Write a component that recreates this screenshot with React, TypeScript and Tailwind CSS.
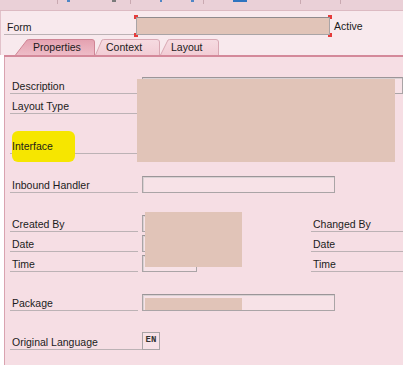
import React from "react";

const font = "font-['Liberation_Sans',Arial,sans-serif]";

function Tab({ label, width, slant, selected, textLeft }: { label: string; width: number; slant: number; selected?: boolean; textLeft: number }) {
  const w = width;
  const d = `M0.5,16 L${slant},1 Q${slant + 1},0.5 ${slant + 3},0.5 L${w - 3},0.5 Q${w - 0.5},0.5 ${w - 0.5},3 L${w - 0.5},16`;
  return (
    <div className="relative h-[16px] shrink-0" style={{ width: w }}>
      <svg className="absolute inset-0" width={w} height={16}>
        <defs>
          <linearGradient id={`g-${label}`} x1="0" y1="0" x2="0" y2="1">
            <stop offset="0" stopColor={selected ? "#e4a1b0" : "#f6dbe1"} />
            <stop offset="1" stopColor={selected ? "#eebcc7" : "#f2cdd5"} />
          </linearGradient>
        </defs>
        <path d={d + " Z"} fill={`url(#g-${label})`} stroke="none" />
        <path d={d} fill="none" stroke={selected ? "#cf8595" : "#d8a8b3"} strokeWidth={1} />
      </svg>
      <span className="absolute top-[1px] text-[10.5px] leading-[14px] text-[#1b1b1b]" style={{ left: textLeft }}>
        {label}
      </span>
    </div>
  );
}

function Label({ children, className = "" }: { children: React.ReactNode; className?: string }) {
  return (
    <div className={`h-full flex items-end border-b border-[#bcb2b5] pl-[2px] pb-[1px] text-[10.5px] leading-[12px] text-[#1b1b1b] ${className}`}>
      {children}
    </div>
  );
}

function Input({ className = "" }: { className?: string }) {
  return <div className={`h-[17px] self-end border border-[#aaa4a6] border-t-[#9b9598] shadow-[inset_1px_1px_0_#d9d1d3] bg-[#f7e2e7] ${className}`} />;
}

export default function App() {
  return (
    <div className={`${font} w-[416px] h-[370px] bg-white`}>
      <div className="w-[403px]">
        {/* top toolbar strip */}
        <div className="h-[11px] bg-[#ead0d7] border-b border-[#dcbac2] relative">
          <div className="absolute left-[57px] top-0 w-px h-[4px] bg-[#c9a9b1]" />
          <div className="absolute left-[67px] top-0 w-[3px] h-[2px] bg-[#4f86c6]" />
          <div className="absolute left-[112px] top-0 w-[4px] h-[2px] bg-[#7a7a7a]" />
          <div className="absolute left-[130px] top-0 w-px h-[4px] bg-[#c9a9b1]" />
          <div className="absolute left-[160px] top-0 w-[2px] h-[2px] bg-[#4f86c6]" />
          <div className="absolute left-[191px] top-0 w-[3px] h-[2px] bg-[#4f86c6]" />
          <div className="absolute left-[203px] top-0 w-px h-[4px] bg-[#c9a9b1]" />
          <div className="absolute left-[233px] top-0 w-[14px] h-[2px] bg-[#2f74c0]" />
          <div className="absolute left-[300px] top-0 w-px h-[4px] bg-[#c9a9b1]" />
          <div className="absolute left-[340px] top-0 w-px h-[4px] bg-[#c9a9b1]" />
        </div>

        {/* header */}
        <div className="bg-[#f8e9ed] border-l border-[#e2c2ca] pt-[6px]">
          <div className="flex items-stretch h-[18px]">
            <div className="w-[131px] ml-[3px] flex items-end border-b border-[#bcb2b5] pl-[3px] pb-[1px] text-[10.5px] leading-[12px] text-[#1b1b1b]">
              Form
            </div>
            <div className="relative ml-[1px] w-[194px] h-[18px] border border-[#a9a4a6] border-t-[#8f8a8c] bg-[#e1c4b8]">
              <span className="absolute -left-[3px] -top-[3px] w-[4px] h-[2px] bg-[#e53b3b]" />
              <span className="absolute -left-[3px] -top-[3px] w-[2px] h-[4px] bg-[#e53b3b]" />
              <span className="absolute -right-[3px] -top-[3px] w-[4px] h-[2px] bg-[#e53b3b]" />
              <span className="absolute -right-[3px] -top-[3px] w-[2px] h-[4px] bg-[#e53b3b]" />
              <span className="absolute -left-[3px] -bottom-[3px] w-[4px] h-[2px] bg-[#e53b3b]" />
              <span className="absolute -left-[3px] -bottom-[3px] w-[2px] h-[4px] bg-[#e53b3b]" />
              <span className="absolute -right-[3px] -bottom-[3px] w-[4px] h-[2px] bg-[#e53b3b]" />
              <span className="absolute -right-[3px] -bottom-[3px] w-[2px] h-[4px] bg-[#e53b3b]" />
            </div>
            <div className="ml-[4px] flex items-center text-[10.5px] leading-[12px] text-[#1b1b1b]">Active</div>
          </div>
          <div className="flex mt-[4px] pl-[14px]">
            <Tab label="Properties" width={80} slant={12} selected textLeft={18} />
            <Tab label="Context" width={65} slant={7} textLeft={11} />
            <Tab label="Layout" width={59} slant={8} textLeft={11} />
          </div>
        </div>
        <div className="h-[2px] ml-[4px] bg-[#d4899a]" />

        {/* panel */}
        <div className="relative ml-[4px] h-[308px] bg-[#f6dee4] border-l border-[#d9a3b0] pl-[5px] flex flex-col">
          {/* Description */}
          <div className="flex h-[18px] mt-[19px]">
            <Label className="w-[128px]">Description</Label>
            <Input className="ml-[4px] flex-1" />
          </div>
          <div className="flex h-[18px] mt-[2px]">
            <Label className="w-[128px]">Layout Type</Label>
          </div>
          <div className="flex h-[18px] mt-[22px]">
            <Label className="w-[128px] relative">
              <span className="absolute left-[2px] -top-[5px] w-[63px] h-[31px] rounded-[6px] bg-[#f6e600]" />
              <span className="relative">Interface</span>
            </Label>
          </div>
          <div className="flex h-[18px] mt-[21px]">
            <Label className="w-[128px]">Inbound Handler</Label>
            <Input className="ml-[4px] w-[193px]" />
          </div>
          <div className="flex h-[18px] mt-[21px]">
            <Label className="w-[128px]">Created By</Label>
            <Input className="ml-[4px] w-[55px]" />
            <Label className="ml-auto w-[92px]">Changed By</Label>
          </div>
          <div className="flex h-[18px] mt-[2px]">
            <Label className="w-[128px]">Date</Label>
            <Input className="ml-[4px] w-[55px]" />
            <Label className="ml-auto w-[92px]">Date</Label>
          </div>
          <div className="flex h-[18px] mt-[2px]">
            <Label className="w-[128px]">Time</Label>
            <Input className="ml-[4px] w-[55px]" />
            <Label className="ml-auto w-[92px]">Time</Label>
          </div>
          <div className="flex h-[18px] mt-[21px]">
            <Label className="w-[128px]">Package</Label>
            <Input className="ml-[4px] w-[193px]" />
          </div>
          <div className="flex h-[18px] mt-[21px]">
            <Label className="w-[133px]">Original Language</Label>
            <div className="-ml-[1px] w-[18px] h-[18px] border border-[#a9a4a6] bg-[#f7e2e7] flex items-center justify-center font-['Liberation_Mono',monospace] text-[9px] font-bold text-[#333]">
              EN
            </div>
          </div>

          {/* redactions */}
          <div className="absolute left-[132px] top-[22px] w-[258px] h-[83px] bg-[#e1c4b8]" />
          <div className="absolute left-[140px] top-[155px] w-[97px] h-[55px] bg-[#e1c4b8]" />
          <div className="absolute left-[140px] top-[241px] w-[97px] h-[12px] bg-[#e1c4b8]" />
        </div>
      </div>
    </div>
  );
}
